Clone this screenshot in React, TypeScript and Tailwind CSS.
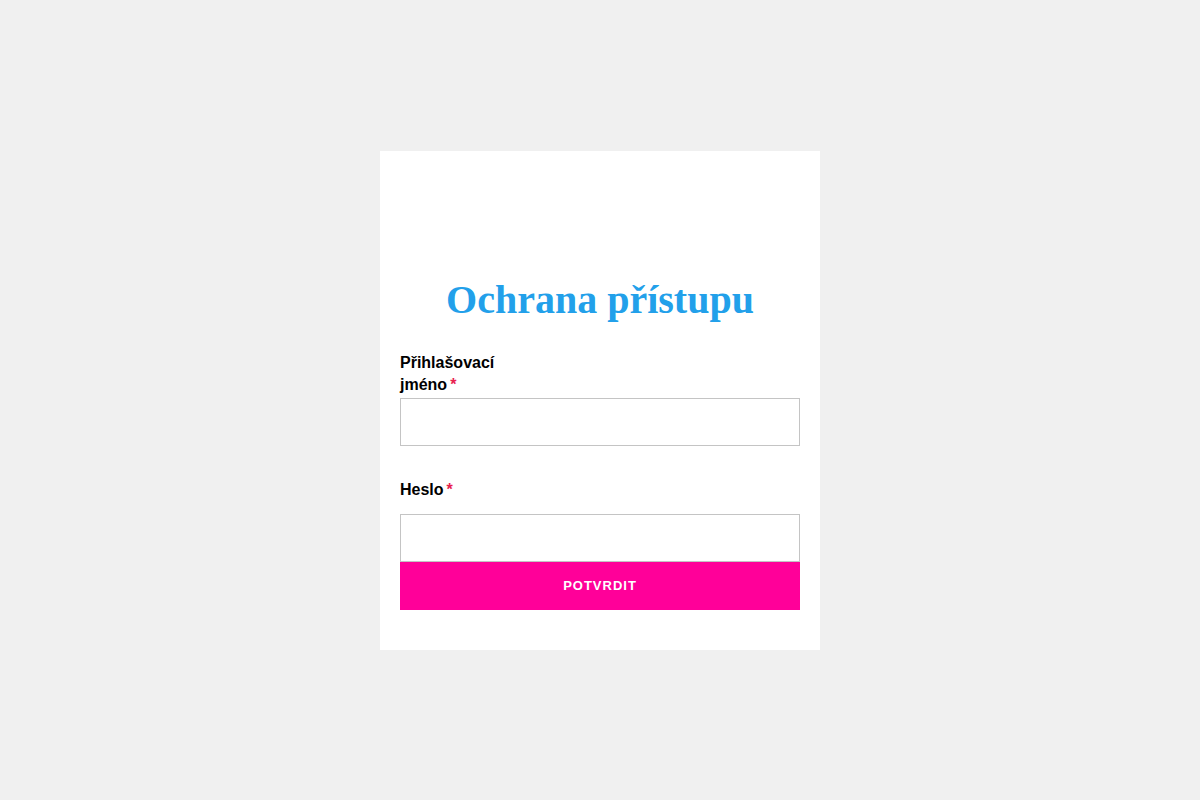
export default function App() {
  return (
    <div className="min-h-screen w-full bg-[#f0f0f0] flex items-center justify-center" style={{ fontFamily: '"Liberation Sans", Arial, sans-serif' }}>
      <div className="w-[440px] bg-white px-5 pt-[125px] pb-10 flex flex-col">
        <h1 className="h-[48px] leading-[48px] text-center text-[40px] font-bold text-[#22a0ea] mb-[27px]" style={{ fontFamily: '"Liberation Serif", "Times New Roman", serif' }}>
          Ochrana přístupu
        </h1>
        <div className="flex flex-col">
          <label className="h-[44px] pt-[2px] flex items-center">
            <span className="max-w-[110px] text-[16px] leading-[22px] font-bold text-black">
              Přihlašovací jméno<span className="text-[#e8214f] ml-[3px]">*</span>
            </span>
          </label>
          <input type="text" className="mt-[3px] h-[48px] w-full border border-[#c4c4c4] bg-white outline-none" />
        </div>
        <div className="flex flex-col mt-[21px]">
          <label className="h-[44px] pt-[2px] flex items-center">
            <span className="text-[16px] leading-[22px] font-bold text-black">
              Heslo<span className="text-[#e8214f] ml-[3px]">*</span>
            </span>
          </label>
          <input type="password" className="mt-[3px] h-[48px] w-full border border-[#c4c4c4] bg-white outline-none" />
        </div>
        <button className="h-[48px] w-full bg-[#ff0099] text-white text-[13px] font-bold tracking-[1px] uppercase">
          Potvrdit
        </button>
      </div>
    </div>
  );
}
